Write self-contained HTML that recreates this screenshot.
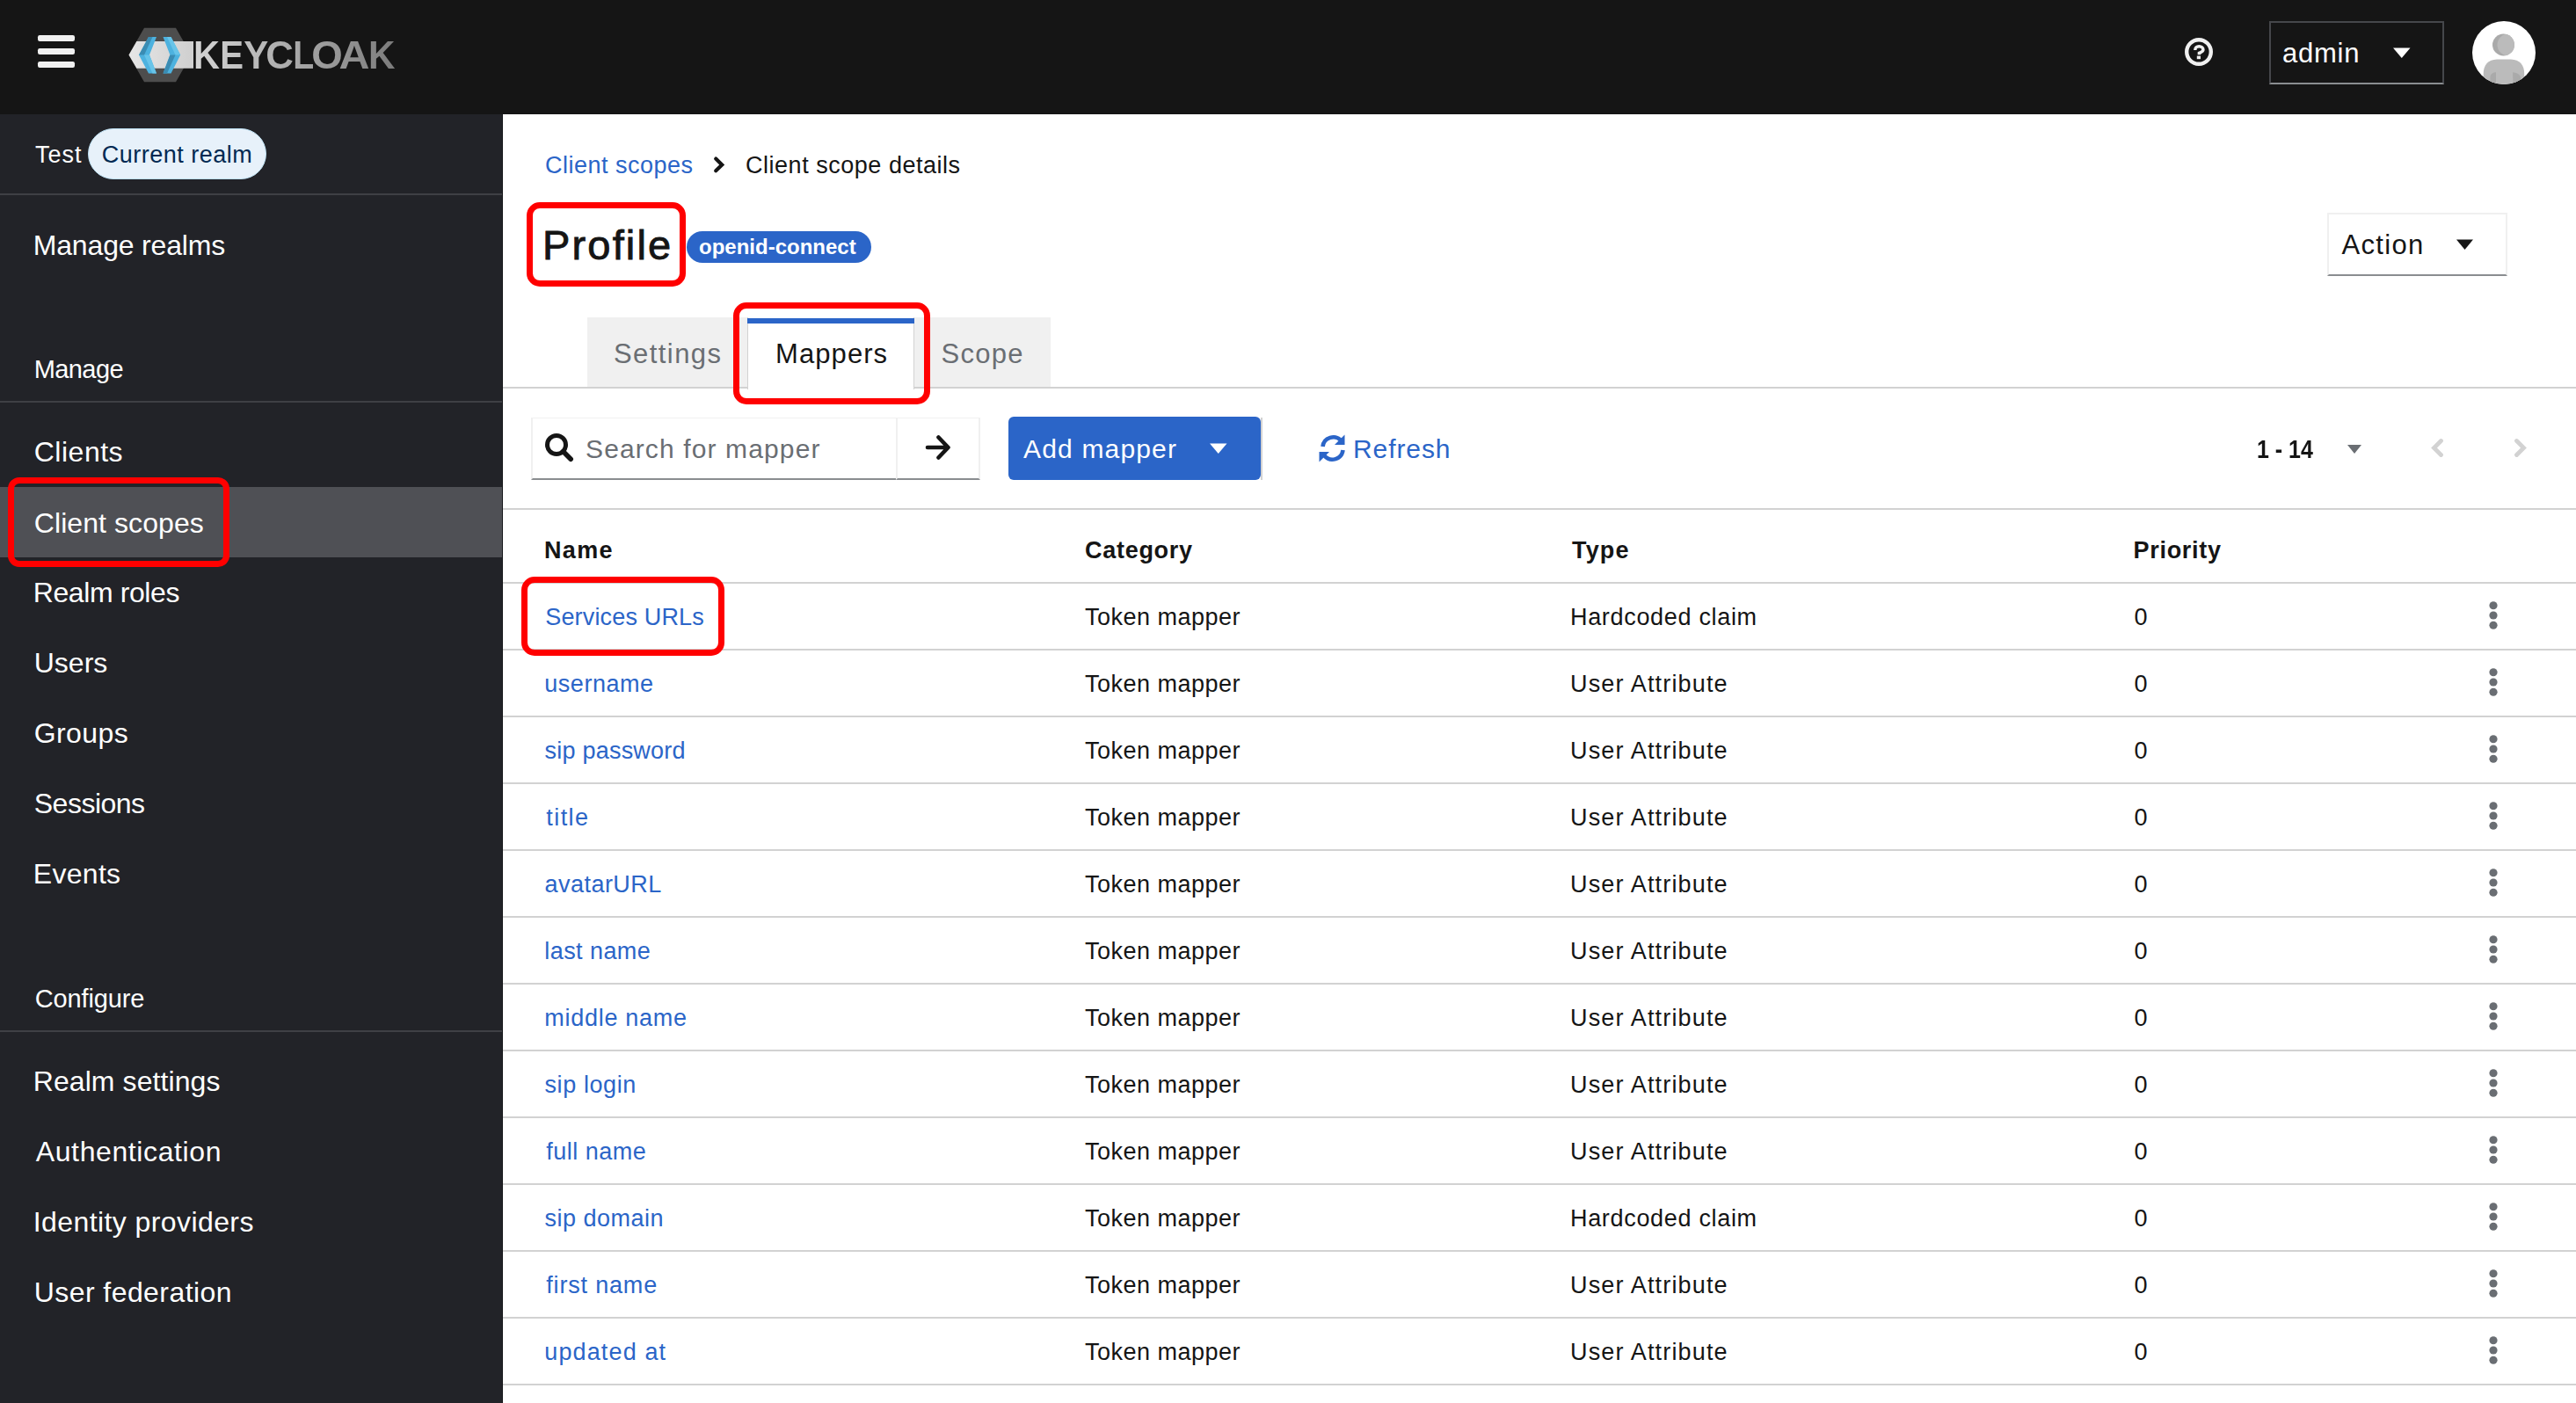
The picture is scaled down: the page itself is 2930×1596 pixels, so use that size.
<!DOCTYPE html>
<html lang="en"><head><meta charset="utf-8"><title>Keycloak - Client scope details</title>
<style>
*{margin:0;padding:0;box-sizing:border-box}
html,body{width:2930px;height:1596px;overflow:hidden;background:#fff;font-family:"Liberation Sans",sans-serif}
.a{position:absolute}
.t{position:absolute;white-space:nowrap;line-height:1}
</style></head><body>
<header>
<div class="a" style="left:0px;top:0px;width:2930px;height:130px;background:#151515;"></div>
<div class="a" style="left:43px;top:40.2px;width:42px;height:6.9px;background:#f0f0f0;border-radius:2.2px"></div>
<div class="a" style="left:43px;top:55.2px;width:42px;height:6.9px;background:#f0f0f0;border-radius:2.2px"></div>
<div class="a" style="left:43px;top:70.3px;width:42px;height:6.9px;background:#f0f0f0;border-radius:2.2px"></div>
<div class="a" style="left:2581px;top:24px;width:199px;height:72px;border:2px solid #45474b;border-bottom-color:#8a8d90"></div>
<svg class="a" style="left:2718px;top:50px" width="28" height="20"><path d="M4 4.5 L23.5 4.5 L13.75 16 Z" fill="#fff"/></svg>
<svg class="a" style="left:2480px;top:38px" width="42" height="42"><circle cx="21" cy="21" r="13.8" fill="none" stroke="#f0f0f0" stroke-width="4.4"/><path d="M16.8 19 C16.8 16.2 18.6 14.7 21.3 14.7 C24 14.7 25.9 16.3 25.9 18.6 C25.9 21 23.4 21.4 21.4 22.4 L21.4 24.2" fill="none" stroke="#f0f0f0" stroke-width="3.5"/><rect x="18.8" y="25.6" width="4.2" height="3.6" fill="#f0f0f0"/></svg>
<svg class="a" style="left:2812px;top:24px" width="72" height="72"><defs><clipPath id="av"><circle cx="36" cy="36" r="36"/></clipPath></defs><circle cx="36" cy="36" r="36" fill="#fff"/><g clip-path="url(#av)"><clipPath id="hd"><circle cx="35.5" cy="27" r="12.5"/></clipPath><circle cx="35.5" cy="27" r="12.5" fill="#aaaaaa"/><circle cx="41" cy="27" r="12.5" fill="#bbbbbb" clip-path="url(#hd)"/><path d="M12.7 72 L12.7 60 C12.7 50 18 44 28 43.6 L44 43.6 C54 44 59.2 50 59.2 60 L59.2 72 Z" fill="#bbbbbb"/><path d="M20.4 72 L20.4 63 C21 60 24 58.3 27 58.3 L27 72 Z" fill="#aaaaaa"/><path d="M46 58.3 C50 58.5 54 60.5 55 63.5 L55 72 L46.5 72 Z" fill="#aaaaaa"/></g></svg>
<svg class="a" style="left:140px;top:25px" width="320" height="75" viewBox="140 25 320 75">
<defs>
<linearGradient id="lg1" x1="0" y1="0" x2="1" y2="0"><stop offset="0" stop-color="#e6e6e6"/><stop offset="1" stop-color="#cfcfcf"/></linearGradient>
<linearGradient id="lg2" x1="223" y1="0" x2="449" y2="0" gradientUnits="userSpaceOnUse"><stop offset="0" stop-color="#d4d4d4"/><stop offset="0.5" stop-color="#a8a8a8"/><stop offset="1" stop-color="#7c7c7c"/></linearGradient>
</defs>
<polygon points="164,31.8 200,31.8 217.5,62.5 200,93.3 164,93.3 146.5,62.5" fill="#4d4d4d"/>
<polygon points="146.5,62.5 155.4,47 220,47 220,77.8 155.4,77.8" fill="url(#lg1)"/>
<polygon points="169,42 178,42 170,62.6 178,83.4 169,83.4 158,62.6" fill="#4db2df"/>
<polygon points="169,42 173.5,42 164,62.6 158,62.6" fill="#3a8cb3"/>
<polygon points="164,62.6 170,62.6 178,83.4 173.5,83.4" fill="#67c4e9"/>
<polygon points="185.5,42 194.5,42 205.2,62.6 194.5,83.4 185.5,83.4 193.4,62.6" fill="#4db2df"/>
<polygon points="190,42 194.5,42 205.2,62.6 199.5,62.6" fill="#67c4e9"/>
<polygon points="193.4,62.6 199.5,62.6 190,83.4 185.5,83.4" fill="#3a8cb3"/>
<clipPath id="kc"><text transform="translate(220.09,78) scale(0.9236,1)" font-family="Liberation Sans" font-weight="700" font-size="45">K</text><text transform="translate(250.19,78) scale(0.8929,1)" font-family="Liberation Sans" font-weight="700" font-size="45">E</text><text transform="translate(277.16,78) scale(0.9347,1)" font-family="Liberation Sans" font-weight="700" font-size="45">Y</text><text transform="translate(302.25,78) scale(0.9744,1)" font-family="Liberation Sans" font-weight="700" font-size="45">C</text><text transform="translate(333.25,78) scale(0.8715,1)" font-family="Liberation Sans" font-weight="700" font-size="45">L</text><text transform="translate(354.17,78) scale(1.0159,1)" font-family="Liberation Sans" font-weight="700" font-size="45">O</text><text transform="translate(385.55,78) scale(1.0774,1)" font-family="Liberation Sans" font-weight="700" font-size="45">A</text><text transform="translate(419.05,78) scale(0.9375,1)" font-family="Liberation Sans" font-weight="700" font-size="45">K</text></clipPath><rect x="220" y="40" width="232" height="45" fill="url(#lg2)" clip-path="url(#kc)"/>
</svg>
<div class="t" style="left:2596.00px;top:45.00px;font-size:31px;color:#ffffff;letter-spacing:0.750px">admin</div>
</header>
<nav>
<div class="a" style="left:0px;top:130px;width:572px;height:1466px;background:#222328;"></div>
<div class="a" style="left:100px;top:146px;width:202.5px;height:58px;background:#e7f1fa;border:1.5px solid #bee1f4;border-radius:29px"></div>
<div class="a" style="left:0px;top:220px;width:572px;height:2px;background:#3f4045;"></div>
<div class="a" style="left:0px;top:456px;width:572px;height:2px;background:#3f4045;"></div>
<div class="a" style="left:0px;top:553.5px;width:572px;height:80px;background:#4f5055;"></div>
<div class="a" style="left:0px;top:1172px;width:572px;height:2px;background:#3f4045;"></div>
<div class="a" style="left:9.2px;top:543px;width:251.7px;height:101.7px;border:7px solid #ff0000;border-radius:13px"></div>
<div class="t" style="left:40.00px;top:163.00px;font-size:27px;color:#ffffff;letter-spacing:1.000px">Test</div>
<div class="t" style="left:115.75px;top:163.00px;font-size:27px;color:#002952;letter-spacing:0.500px">Current realm</div>
<div class="t" style="left:37.75px;top:263.00px;font-size:32px;color:#ffffff;letter-spacing:-0.167px">Manage realms</div>
<div class="t" style="left:38.75px;top:406.00px;font-size:29px;color:#ffffff;letter-spacing:-0.600px">Manage</div>
<div class="t" style="left:38.75px;top:498.00px;font-size:32px;color:#ffffff;letter-spacing:0.500px">Clients</div>
<div class="t" style="left:38.75px;top:578.50px;font-size:32px;color:#ffffff;letter-spacing:0.083px">Client scopes</div>
<div class="t" style="left:37.75px;top:658.00px;font-size:32px;color:#ffffff;letter-spacing:-0.400px">Realm roles</div>
<div class="t" style="left:38.75px;top:738.00px;font-size:32px;color:#ffffff">Users</div>
<div class="t" style="left:38.75px;top:818.00px;font-size:32px;color:#ffffff;letter-spacing:0.400px">Groups</div>
<div class="t" style="left:38.75px;top:897.50px;font-size:32px;color:#ffffff;letter-spacing:-0.500px">Sessions</div>
<div class="t" style="left:37.75px;top:977.50px;font-size:32px;color:#ffffff;letter-spacing:0.300px">Events</div>
<div class="t" style="left:39.75px;top:1121.50px;font-size:29px;color:#ffffff;letter-spacing:-0.125px">Configure</div>
<div class="t" style="left:37.75px;top:1214.00px;font-size:32px;color:#ffffff;letter-spacing:0.077px">Realm settings</div>
<div class="t" style="left:40.75px;top:1294.00px;font-size:32px;color:#ffffff;letter-spacing:0.615px">Authentication</div>
<div class="t" style="left:37.75px;top:1373.50px;font-size:32px;color:#ffffff;letter-spacing:0.412px">Identity providers</div>
<div class="t" style="left:38.75px;top:1453.50px;font-size:32px;color:#ffffff;letter-spacing:0.429px">User federation</div>
</nav>
<main>
<div class="a" style="left:571px;top:130px;width:1px;height:1466px;background:#16171a;"></div>
<div class="a" style="left:572px;top:130px;width:2358px;height:1466px;background:#ffffff;"></div>
<svg class="a" style="left:806px;top:174px" width="24" height="28"><path d="M8.2 6.6 L15.2 13.4 L8.2 20.2" fill="none" stroke="#151515" stroke-width="4.2" stroke-linecap="round"/></svg>
<div class="a" style="left:780.5px;top:263px;width:210.5px;height:36px;background:#2b65c8;border-radius:18px"></div>
<div class="a" style="left:599px;top:230px;width:181px;height:96px;border:7px solid #ff0000;border-radius:15px"></div>
<div class="a" style="left:2647px;top:242px;width:204.5px;height:72px;border:2px solid #f0f0f0;border-bottom-color:#8a8d90"></div>
<svg class="a" style="left:2790px;top:266px" width="28" height="24"><path d="M4 6.5 L23 6.5 L13.5 18 Z" fill="#151515"/></svg>
<div class="a" style="left:572px;top:440px;width:2358px;height:2px;background:#d2d2d2;"></div>
<div class="a" style="left:667.5px;top:361px;width:527.5px;height:79px;background:#f0f0f0;"></div>
<div class="a" style="left:850px;top:361px;width:190px;height:82px;background:#fff;border-left:1.5px solid #d2d2d2;border-right:1.5px solid #d2d2d2"></div>
<div class="a" style="left:850px;top:361.5px;width:190px;height:6px;background:#2b65c8;"></div>
<div class="a" style="left:834px;top:344px;width:223.5px;height:116px;border:7px solid #ff0000;border-radius:15px"></div>
<div class="a" style="left:604px;top:474.5px;width:415px;height:71px;border:1.5px solid #f0f0f0;border-left:2px solid #f0f0f0;border-bottom:2px solid #8a8d90;border-right:none"></div>
<div class="a" style="left:1018.5px;top:474.5px;width:96px;height:71px;border:2px solid #f0f0f0;border-top-width:1.5px;border-bottom:2px solid #8a8d90"></div>
<svg class="a" style="left:616px;top:490px" width="40" height="40"><circle cx="17" cy="16" r="10.5" fill="none" stroke="#151515" stroke-width="5"/><path d="M24.5 23.5 L33.2 32.2" stroke="#151515" stroke-width="5.6" stroke-linecap="round"/></svg>
<svg class="a" style="left:1046px;top:489px" width="40" height="40"><path d="M9 20 L32 20 M21.5 8.5 L32.5 20 L21.5 31.5" fill="none" stroke="#151515" stroke-width="4.6" stroke-linecap="round" stroke-linejoin="round"/></svg>
<div class="a" style="left:1147px;top:474px;width:287px;height:71.5px;background:#2b65c8;border-radius:6px"></div>
<div class="a" style="left:1434px;top:474.5px;width:1.5px;height:71px;background:#d2d2d2;"></div>
<svg class="a" style="left:1372px;top:498px" width="28" height="24"><path d="M4 6.5 L23.5 6.5 L13.75 18 Z" fill="#fff"/></svg>
<svg class="a" style="left:1496px;top:490px" width="40" height="40" viewBox="0 0 40 40"><path d="M8.5 18 A12 12 0 0 1 29.5 11.5" fill="none" stroke="#2b65c8" stroke-width="4.6"/><path d="M33.5 4.5 L33.5 16 L22 16 Z" fill="#2b65c8"/><path d="M31.5 22 A12 12 0 0 1 10.5 28.5" fill="none" stroke="#2b65c8" stroke-width="4.6"/><path d="M4.5 35.5 L4.5 24 L16 24 Z" fill="#2b65c8"/></svg>
<svg class="a" style="left:2666px;top:502px" width="24" height="18"><path d="M4 4 L20 4 L12 14 Z" fill="#6a6e73"/></svg>
<svg class="a" style="left:2760px;top:494px" width="24" height="30"><path d="M16.5 7.5 L8.5 15.5 L16.5 23.5" fill="none" stroke="#d2d2d2" stroke-width="4.8" stroke-linecap="round" stroke-linejoin="miter"/></svg>
<svg class="a" style="left:2855px;top:494px" width="24" height="30"><path d="M7.5 7.5 L15.5 15.5 L7.5 23.5" fill="none" stroke="#d2d2d2" stroke-width="4.8" stroke-linecap="round" stroke-linejoin="miter"/></svg>
<div class="a" style="left:572px;top:578px;width:2358px;height:2px;background:#d2d2d2;"></div>
<div class="a" style="left:572px;top:661.5px;width:2358px;height:2px;background:#d2d2d2;"></div>
<div class="a" style="left:572px;top:737.53px;width:2358px;height:2px;background:#d2d2d2;"></div>
<div class="a" style="left:572px;top:813.56px;width:2358px;height:2px;background:#d2d2d2;"></div>
<div class="a" style="left:572px;top:889.59px;width:2358px;height:2px;background:#d2d2d2;"></div>
<div class="a" style="left:572px;top:965.62px;width:2358px;height:2px;background:#d2d2d2;"></div>
<div class="a" style="left:572px;top:1041.65px;width:2358px;height:2px;background:#d2d2d2;"></div>
<div class="a" style="left:572px;top:1117.68px;width:2358px;height:2px;background:#d2d2d2;"></div>
<div class="a" style="left:572px;top:1193.71px;width:2358px;height:2px;background:#d2d2d2;"></div>
<div class="a" style="left:572px;top:1269.74px;width:2358px;height:2px;background:#d2d2d2;"></div>
<div class="a" style="left:572px;top:1345.77px;width:2358px;height:2px;background:#d2d2d2;"></div>
<div class="a" style="left:572px;top:1421.8px;width:2358px;height:2px;background:#d2d2d2;"></div>
<div class="a" style="left:572px;top:1497.83px;width:2358px;height:2px;background:#d2d2d2;"></div>
<div class="a" style="left:572px;top:1573.8600000000001px;width:2358px;height:2px;background:#d2d2d2;"></div>
<div class="a" style="left:572px;top:1649.8899999999999px;width:2358px;height:2px;background:#d2d2d2;"></div>
<svg class="a" style="left:2826px;top:675.50px" width="20" height="48"><circle cx="10" cy="12.75" r="4.6" fill="#6a6e73"/><circle cx="10" cy="24" r="4.6" fill="#6a6e73"/><circle cx="10" cy="35.25" r="4.6" fill="#6a6e73"/></svg>
<svg class="a" style="left:2826px;top:751.53px" width="20" height="48"><circle cx="10" cy="12.75" r="4.6" fill="#6a6e73"/><circle cx="10" cy="24" r="4.6" fill="#6a6e73"/><circle cx="10" cy="35.25" r="4.6" fill="#6a6e73"/></svg>
<svg class="a" style="left:2826px;top:827.56px" width="20" height="48"><circle cx="10" cy="12.75" r="4.6" fill="#6a6e73"/><circle cx="10" cy="24" r="4.6" fill="#6a6e73"/><circle cx="10" cy="35.25" r="4.6" fill="#6a6e73"/></svg>
<svg class="a" style="left:2826px;top:903.59px" width="20" height="48"><circle cx="10" cy="12.75" r="4.6" fill="#6a6e73"/><circle cx="10" cy="24" r="4.6" fill="#6a6e73"/><circle cx="10" cy="35.25" r="4.6" fill="#6a6e73"/></svg>
<svg class="a" style="left:2826px;top:979.62px" width="20" height="48"><circle cx="10" cy="12.75" r="4.6" fill="#6a6e73"/><circle cx="10" cy="24" r="4.6" fill="#6a6e73"/><circle cx="10" cy="35.25" r="4.6" fill="#6a6e73"/></svg>
<svg class="a" style="left:2826px;top:1055.65px" width="20" height="48"><circle cx="10" cy="12.75" r="4.6" fill="#6a6e73"/><circle cx="10" cy="24" r="4.6" fill="#6a6e73"/><circle cx="10" cy="35.25" r="4.6" fill="#6a6e73"/></svg>
<svg class="a" style="left:2826px;top:1131.68px" width="20" height="48"><circle cx="10" cy="12.75" r="4.6" fill="#6a6e73"/><circle cx="10" cy="24" r="4.6" fill="#6a6e73"/><circle cx="10" cy="35.25" r="4.6" fill="#6a6e73"/></svg>
<svg class="a" style="left:2826px;top:1207.71px" width="20" height="48"><circle cx="10" cy="12.75" r="4.6" fill="#6a6e73"/><circle cx="10" cy="24" r="4.6" fill="#6a6e73"/><circle cx="10" cy="35.25" r="4.6" fill="#6a6e73"/></svg>
<svg class="a" style="left:2826px;top:1283.74px" width="20" height="48"><circle cx="10" cy="12.75" r="4.6" fill="#6a6e73"/><circle cx="10" cy="24" r="4.6" fill="#6a6e73"/><circle cx="10" cy="35.25" r="4.6" fill="#6a6e73"/></svg>
<svg class="a" style="left:2826px;top:1359.77px" width="20" height="48"><circle cx="10" cy="12.75" r="4.6" fill="#6a6e73"/><circle cx="10" cy="24" r="4.6" fill="#6a6e73"/><circle cx="10" cy="35.25" r="4.6" fill="#6a6e73"/></svg>
<svg class="a" style="left:2826px;top:1435.80px" width="20" height="48"><circle cx="10" cy="12.75" r="4.6" fill="#6a6e73"/><circle cx="10" cy="24" r="4.6" fill="#6a6e73"/><circle cx="10" cy="35.25" r="4.6" fill="#6a6e73"/></svg>
<svg class="a" style="left:2826px;top:1511.83px" width="20" height="48"><circle cx="10" cy="12.75" r="4.6" fill="#6a6e73"/><circle cx="10" cy="24" r="4.6" fill="#6a6e73"/><circle cx="10" cy="35.25" r="4.6" fill="#6a6e73"/></svg>
<svg class="a" style="left:2826px;top:1587.86px" width="20" height="48"><circle cx="10" cy="12.75" r="4.6" fill="#6a6e73"/><circle cx="10" cy="24" r="4.6" fill="#6a6e73"/><circle cx="10" cy="35.25" r="4.6" fill="#6a6e73"/></svg>
<div class="a" style="left:593px;top:656px;width:231px;height:90px;border:7px solid #ff0000;border-radius:15px"></div>
<div class="t" style="left:620.00px;top:175.00px;font-size:27px;color:#2b65c8;letter-spacing:0.500px">Client scopes</div>
<div class="t" style="left:848.00px;top:175.00px;font-size:27px;color:#151515;letter-spacing:0.526px">Client scope details</div>
<div class="t" style="left:617.00px;top:255.00px;font-size:47px;color:#151515;letter-spacing:2.167px;-webkit-text-stroke:0.9px #151515">Profile</div>
<div class="t" style="left:795.00px;top:269.00px;font-size:24px;color:#ffffff;font-weight:700">openid-connect</div>
<div class="t" style="left:2663.50px;top:263.00px;font-size:31px;color:#151515;letter-spacing:1.300px">Action</div>
<div class="t" style="left:698.00px;top:386.50px;font-size:31px;color:#6a6e73;letter-spacing:1.429px">Settings</div>
<div class="t" style="left:882.00px;top:386.50px;font-size:31px;color:#151515;letter-spacing:1.083px">Mappers</div>
<div class="t" style="left:1070.50px;top:386.50px;font-size:31px;color:#6a6e73;letter-spacing:1.250px">Scope</div>
<div class="t" style="left:666.00px;top:496.00px;font-size:30px;color:#6a6e73;letter-spacing:1.125px">Search for mapper</div>
<div class="t" style="left:1164.00px;top:496.00px;font-size:30px;color:#ffffff;letter-spacing:1.167px">Add mapper</div>
<div class="t" style="left:1539.00px;top:496.00px;font-size:30px;color:#2b65c8;letter-spacing:0.917px">Refresh</div>
<div class="t" style="left:2566.83px;top:495.50px;font-size:30px;color:#151515;transform:scaleX(0.8333);transform-origin:0 0;font-weight:700">1 - 14</div>
<div class="t" style="left:619.00px;top:613.00px;font-size:27px;color:#151515;font-weight:700;letter-spacing:1.333px">Name</div>
<div class="t" style="left:1234.00px;top:613.00px;font-size:27px;color:#151515;font-weight:700;letter-spacing:0.714px">Category</div>
<div class="t" style="left:1788.00px;top:613.00px;font-size:27px;color:#151515;font-weight:700;letter-spacing:1.167px">Type</div>
<div class="t" style="left:2426.50px;top:613.00px;font-size:27px;color:#151515;font-weight:700;letter-spacing:0.714px">Priority</div>
<div class="t" style="left:620.25px;top:689.00px;font-size:27px;color:#2b65c8;letter-spacing:0.167px">Services URLs</div>
<div class="t" style="left:1234.00px;top:689.00px;font-size:27px;color:#151515;letter-spacing:0.500px">Token mapper</div>
<div class="t" style="left:1786.00px;top:689.00px;font-size:27px;color:#151515;letter-spacing:0.679px">Hardcoded claim</div>
<div class="t" style="left:2427.50px;top:689.00px;font-size:27px;color:#151515;letter-spacing:0.500px">0</div>
<div class="t" style="left:619.25px;top:765.03px;font-size:27px;color:#2b65c8;letter-spacing:0.536px">username</div>
<div class="t" style="left:1234.00px;top:765.03px;font-size:27px;color:#151515;letter-spacing:0.500px">Token mapper</div>
<div class="t" style="left:1786.00px;top:765.03px;font-size:27px;color:#151515;letter-spacing:1.154px">User Attribute</div>
<div class="t" style="left:2427.50px;top:765.03px;font-size:27px;color:#151515;letter-spacing:0.500px">0</div>
<div class="t" style="left:619.50px;top:841.06px;font-size:27px;color:#2b65c8;letter-spacing:0.227px">sip password</div>
<div class="t" style="left:1234.00px;top:841.06px;font-size:27px;color:#151515;letter-spacing:0.500px">Token mapper</div>
<div class="t" style="left:1786.00px;top:841.06px;font-size:27px;color:#151515;letter-spacing:1.154px">User Attribute</div>
<div class="t" style="left:2427.50px;top:841.06px;font-size:27px;color:#151515;letter-spacing:0.500px">0</div>
<div class="t" style="left:621.25px;top:917.09px;font-size:27px;color:#2b65c8;letter-spacing:1.438px">title</div>
<div class="t" style="left:1234.00px;top:917.09px;font-size:27px;color:#151515;letter-spacing:0.500px">Token mapper</div>
<div class="t" style="left:1786.00px;top:917.09px;font-size:27px;color:#151515;letter-spacing:1.154px">User Attribute</div>
<div class="t" style="left:2427.50px;top:917.09px;font-size:27px;color:#151515;letter-spacing:0.500px">0</div>
<div class="t" style="left:619.50px;top:993.12px;font-size:27px;color:#2b65c8;letter-spacing:0.469px">avatarURL</div>
<div class="t" style="left:1234.00px;top:993.12px;font-size:27px;color:#151515;letter-spacing:0.500px">Token mapper</div>
<div class="t" style="left:1786.00px;top:993.12px;font-size:27px;color:#151515;letter-spacing:1.154px">User Attribute</div>
<div class="t" style="left:2427.50px;top:993.12px;font-size:27px;color:#151515;letter-spacing:0.500px">0</div>
<div class="t" style="left:619.25px;top:1069.15px;font-size:27px;color:#2b65c8;letter-spacing:0.438px">last name</div>
<div class="t" style="left:1234.00px;top:1069.15px;font-size:27px;color:#151515;letter-spacing:0.500px">Token mapper</div>
<div class="t" style="left:1786.00px;top:1069.15px;font-size:27px;color:#151515;letter-spacing:1.154px">User Attribute</div>
<div class="t" style="left:2427.50px;top:1069.15px;font-size:27px;color:#151515;letter-spacing:0.500px">0</div>
<div class="t" style="left:619.25px;top:1145.18px;font-size:27px;color:#2b65c8;letter-spacing:0.725px">middle name</div>
<div class="t" style="left:1234.00px;top:1145.18px;font-size:27px;color:#151515;letter-spacing:0.500px">Token mapper</div>
<div class="t" style="left:1786.00px;top:1145.18px;font-size:27px;color:#151515;letter-spacing:1.154px">User Attribute</div>
<div class="t" style="left:2427.50px;top:1145.18px;font-size:27px;color:#151515;letter-spacing:0.500px">0</div>
<div class="t" style="left:619.50px;top:1221.21px;font-size:27px;color:#2b65c8;letter-spacing:0.594px">sip login</div>
<div class="t" style="left:1234.00px;top:1221.21px;font-size:27px;color:#151515;letter-spacing:0.500px">Token mapper</div>
<div class="t" style="left:1786.00px;top:1221.21px;font-size:27px;color:#151515;letter-spacing:1.154px">User Attribute</div>
<div class="t" style="left:2427.50px;top:1221.21px;font-size:27px;color:#151515;letter-spacing:0.500px">0</div>
<div class="t" style="left:621.25px;top:1297.24px;font-size:27px;color:#2b65c8;letter-spacing:0.500px">full name</div>
<div class="t" style="left:1234.00px;top:1297.24px;font-size:27px;color:#151515;letter-spacing:0.500px">Token mapper</div>
<div class="t" style="left:1786.00px;top:1297.24px;font-size:27px;color:#151515;letter-spacing:1.154px">User Attribute</div>
<div class="t" style="left:2427.50px;top:1297.24px;font-size:27px;color:#151515;letter-spacing:0.500px">0</div>
<div class="t" style="left:619.50px;top:1373.27px;font-size:27px;color:#2b65c8;letter-spacing:0.500px">sip domain</div>
<div class="t" style="left:1234.00px;top:1373.27px;font-size:27px;color:#151515;letter-spacing:0.500px">Token mapper</div>
<div class="t" style="left:1786.00px;top:1373.27px;font-size:27px;color:#151515;letter-spacing:0.679px">Hardcoded claim</div>
<div class="t" style="left:2427.50px;top:1373.27px;font-size:27px;color:#151515;letter-spacing:0.500px">0</div>
<div class="t" style="left:621.25px;top:1449.30px;font-size:27px;color:#2b65c8;letter-spacing:0.822px">first name</div>
<div class="t" style="left:1234.00px;top:1449.30px;font-size:27px;color:#151515;letter-spacing:0.500px">Token mapper</div>
<div class="t" style="left:1786.00px;top:1449.30px;font-size:27px;color:#151515;letter-spacing:1.154px">User Attribute</div>
<div class="t" style="left:2427.50px;top:1449.30px;font-size:27px;color:#151515;letter-spacing:0.500px">0</div>
<div class="t" style="left:619.25px;top:1525.33px;font-size:27px;color:#2b65c8;letter-spacing:1.133px">updated at</div>
<div class="t" style="left:1234.00px;top:1525.33px;font-size:27px;color:#151515;letter-spacing:0.500px">Token mapper</div>
<div class="t" style="left:1786.00px;top:1525.33px;font-size:27px;color:#151515;letter-spacing:1.154px">User Attribute</div>
<div class="t" style="left:2427.50px;top:1525.33px;font-size:27px;color:#151515;letter-spacing:0.500px">0</div>
</main>

</body></html>
